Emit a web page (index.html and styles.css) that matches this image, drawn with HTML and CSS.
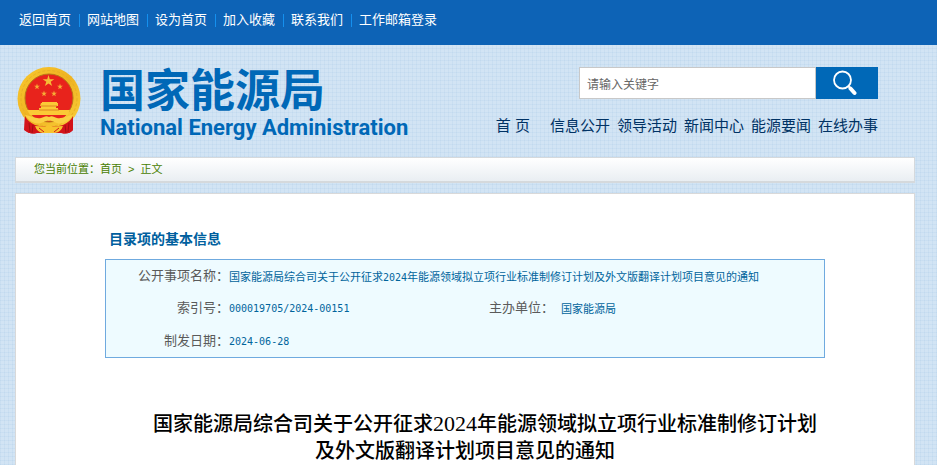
FILE: index.html
```html
<!DOCTYPE html>
<html lang="zh-CN">
<head>
<meta charset="utf-8">
<title>国家能源局</title>
<link rel="stylesheet" href="styles.css">
</head>
<body>
<nav class="topbar">
  <a href="#">返回首页</a>
  <a href="#">网站地图</a>
  <a href="#">设为首页</a>
  <a href="#">加入收藏</a>
  <a href="#">联系我们</a>
  <a href="#">工作邮箱登录</a>
</nav>
<div class="page">
  <header class="header">
    <a class="brand" href="#">
      <svg class="emblem" viewBox="0 0 64 68" aria-hidden="true">
        <defs>
          <linearGradient id="gold" x1="0" y1="0" x2="1" y2="1">
            <stop offset="0" stop-color="#f9c82f"/>
            <stop offset=".5" stop-color="#efb321"/>
            <stop offset="1" stop-color="#fbd23c"/>
          </linearGradient>
        </defs>
        <path d="M8 45 L7 63 Q13 68 20 66 L44 66 Q52 68 56 63 L55 45Z" fill="#d3131a"/>
        <circle cx="32" cy="31.500" r="31.500" fill="url(#gold)"/>
        <circle cx="32" cy="31.500" r="28" fill="none" stroke="#e8b024" stroke-width="1" stroke-dasharray="3 2"/>
        <circle cx="32" cy="31" r="24" fill="#e8231c" stroke="#b87616" stroke-width="1"/>
        <path d="M31.500 8l1.300 4.200h4.500l-3.600 2.600 1.400 4.200-3.600-2.600-3.600 2.600 1.400-4.200-3.600-2.600h4.500z" fill="#f6bd36"/>
        <path id="star" d="M20 16.500l.7 2.200H23l-1.900 1.300.7 2.200-1.800-1.300-1.800 1.300.7-2.200-1.900-1.300h2.300z" fill="#f6ad36"/>
        <use href="#star" x="23"/>
        <use href="#star" x="7" y="7"/>
        <use href="#star" x="17" y="7"/>
        <path d="M24 36h1v-1h15v1h1v3h-2v2h2v2h12l-2 5H13l-3-5h12v-2h2v-2h-1z" fill="#fbc936"/>
        <path d="M24 39h16M22 43h20" stroke="#de8620" stroke-width="1"/>
        <path d="M15 48h34l-5 5H20z" fill="#e8231c"/>
        <path d="M8 49Q11 55 18 58Q24 60 32 60T46 58Q53 55 56 49L56 63Q51 68 45 66H19Q13 68 8 63Z" fill="#d3131a"/>
        <path d="M12 56l1 9M16 58l-1 8M48 58l1 8M52 56l-1 9" stroke="#a50d12" fill="none"/>
        <path d="M8 48c6 1 11 4 16 3 3-1 5-3 8-1 3-2 5 0 8 1 5 1 10-2 16-3-5 7-11 10-16 8-4-1-5-3-8-2-3-1-4 1-8 2-5 2-11-1-16-8z" fill="#fbd044"/>
        <path d="M28 60q4-4 8 0 5-1 10-1-2 6-8 7H26q-6-1-8-7 5 0 10 1z" fill="#f8c32d"/>
        <path d="M22 61l5 4M42 61l-5 4" stroke="#d3131a" stroke-width="1"/>
      </svg>
      <span class="brand-text">
        <span class="brand-cn">国家能源局</span>
        <span class="brand-en">National Energy Administration</span>
      </span>
    </a>
    <div class="tools">
      <form class="search">
        <input type="text" aria-label="请输入关键字" placeholder="请输入关键字">
        <button type="button" aria-label="搜索">
          <svg viewBox="0 0 24 26" aria-hidden="true">
            <circle cx="9.500" cy="10" r="8.500" fill="none" stroke="#fff" stroke-width="1.800"/>
            <path d="M15 16l2.500 2" stroke="#fff" stroke-width="2"/>
            <path d="M17.500 18.500l4 4.500" stroke="#fff" stroke-width="4" stroke-linecap="round"/>
          </svg>
        </button>
      </form>
      <nav class="mainnav">
        <a class="home" href="#">首 页</a>
        <a href="#">信息公开</a>
        <a href="#">领导活动</a>
        <a href="#">新闻中心</a>
        <a href="#">能源要闻</a>
        <a href="#">在线办事</a>
      </nav>
    </div>
  </header>
  <nav class="crumbs"><span>您当前位置：</span><a href="#">首页</a><span class="sep">&gt;</span><a href="#">正文</a></nav>
  <main class="panel">
    <article class="content">
      <h2>目录项的基本信息</h2>
      <table class="info">
        <colgroup>
          <col class="col-label">
          <col class="col-value">
          <col class="col-label2">
          <col>
        </colgroup>
        <tr>
          <th scope="row">公开事项名称：</th>
          <td colspan="3">国家能源局综合司关于公开征求<span class="num">2024</span>年能源领域拟立项行业标准制修订计划及外文版翻译计划项目意见的通知</td>
        </tr>
        <tr>
          <th scope="row">索引号：</th>
          <td><span class="num">000019705/2024-00151</span></td>
          <th scope="row" class="second">主办单位：</th>
          <td>国家能源局</td>
        </tr>
        <tr>
          <th scope="row">制发日期：</th>
          <td colspan="3"><span class="num">2024-06-28</span></td>
        </tr>
      </table>
      <h1>国家能源局综合司关于公开征求<span class="year">2024</span>年能源领域拟立项行业标准制修订计划<br>及外文版翻译计划项目意见的通知</h1>
    </article>
  </main>
</div>
</body>
</html>
```

FILE: styles.css
```css
* {
  box-sizing: border-box;
}

body {
  margin: 0;
  font-family: "Liberation Sans", "Noto Sans CJK SC", sans-serif;
  background-color: #d2e4f4;
  background-image:
    repeating-linear-gradient(90deg, rgba(150, 190, 225, .14) 0 1px, transparent 1px 4px),
    repeating-linear-gradient(rgba(150, 190, 225, .14) 0 1px, transparent 1px 4px);
}

a {
  color: inherit;
  text-decoration: none;
}

.topbar {
  display: flex;
  align-items: flex-start;
  height: 45px;
  padding: 10px 19px;
  background: #0d63b6;
  color: #fff;
  font-size: 13px;
  line-height: 20px;
}

.topbar a + a {
  display: flex;
  align-items: center;
}

.topbar a + a::before {
  content: "";
  width: 1px;
  height: 13px;
  margin: 0 7px 0 8px;
  background: #1590ee;
}

.page {
  margin: 0 22px 0 15px;
}

.header {
  display: flex;
  justify-content: space-between;
  height: 112px;
  padding: 22px 37px 0 2px;
}

.brand {
  display: flex;
  gap: 19px;
  color: #0068b7;
  font-weight: bold;
}

.emblem {
  width: 64px;
  height: 68px;
}

.brand-text {
  display: flex;
  flex-direction: column;
  padding-top: 1px;
  white-space: nowrap;
}

.brand-cn {
  font-size: 45px;
  line-height: 48px;
}

.brand-en {
  font-family: Roboto, "Liberation Sans", sans-serif;
  font-size: 22px;
  line-height: 24px;
}

.search {
  display: flex;
  width: 299px;
  height: 32px;
  margin-left: auto;
}

.search input {
  flex: 1;
  min-width: 0;
  padding: 0 7px;
  border: 1px solid #c8c8c8;
  font: 12px "Noto Sans CJK SC", sans-serif;
}

.search input::placeholder {
  color: #666;
}

.search button {
  display: flex;
  align-items: center;
  justify-content: center;
  width: 62px;
  padding: 0 4px 0 0;
  border: 0;
  background: #0068b7;
}

.search svg {
  width: 24px;
  height: 26px;
}

.mainnav {
  display: flex;
  justify-content: flex-end;
  gap: 7px;
  margin-top: 16px;
  color: #003264;
  font-size: 15px;
  line-height: 22px;
  white-space: nowrap;
}

.mainnav .home {
  margin-right: 13px;
}

.crumbs {
  display: flex;
  height: 26px;
  padding: 0 18px;
  border: 1px solid #d5d9dc;
  border-bottom-width: 2px;
  background: linear-gradient(#fff, #e9eef2);
  color: #488000;
  font-size: 11px;
  line-height: 23px;
}

.crumbs .sep {
  padding: 0 6px;
}

.panel {
  margin-top: 10px;
  padding-top: 34px;
  border: 1px solid #d9d9d9;
  border-bottom: 0;
  background: #fff;
}

.content {
  max-width: 720px;
  margin: 0 auto;
}

h2 {
  margin: 0 0 9px;
  padding-left: 4px;
  color: #005f9e;
  font-size: 14px;
  line-height: 22px;
}

.info {
  width: 100%;
  border: 1px solid #6faadf;
  border-spacing: 0;
  background: #eefbff;
  table-layout: fixed;
}

.col-label {
  width: 123px;
}

.col-value {
  width: 260px;
}

.col-label2 {
  width: 72px;
}

.info th,
.info td {
  height: 32px;
  padding: 0;
}

.info tr:last-child > * {
  height: 33px;
}

.info th {
  color: #5a5a5a;
  font-size: 13px;
  font-weight: normal;
  line-height: 18px;
  text-align: right;
}

.info td {
  color: #00649c;
  font-size: 11px;
  white-space: nowrap;
}

.info .second {
  text-align: left;
}

.num {
  font-family: "DejaVu Sans Mono", monospace;
  font-size: 10px;
}

h1 {
  margin: 0;
  padding: 53px 0 20px;
  color: #000;
  font-size: 20px;
  font-weight: 500;
  line-height: 27px;
  text-align: center;
  text-indent: 40px;
  white-space: nowrap;
}

.year {
  font-family: "Liberation Serif", serif;
  font-size: 22px;
  line-height: 20px;
}
```
